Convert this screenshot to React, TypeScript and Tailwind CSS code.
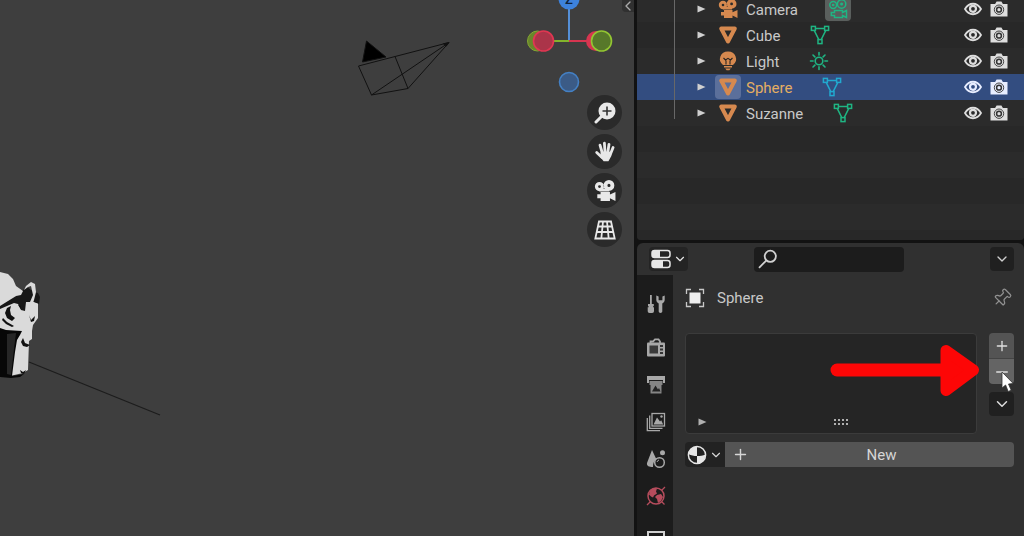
import React from 'react';
import { ChevronDown, ChevronLeft, Minus, Pin, Plus } from 'lucide-react';

type ObjectKind = 'camera' | 'mesh' | 'light';

interface SceneObject {
    name: string;
    kind: ObjectKind;
    selected?: boolean;
    activeData?: boolean;
}

const OBJECTS: SceneObject[] = [
    { name: 'Camera', kind: 'camera', activeData: true },
    { name: 'Cube', kind: 'mesh' },
    { name: 'Light', kind: 'light' },
    { name: 'Sphere', kind: 'mesh', selected: true },
    { name: 'Suzanne', kind: 'mesh' },
];

interface IconProps {
    size?: number;
}

/* ---------- Icons ---------- */

const MovieCameraIcon: React.FC<IconProps> = ({ size = 20 }) => (
    <svg width={size} height={size} viewBox="0 0 20 20" fill="currentColor" aria-hidden="true">
        <path
            fillRule="evenodd"
            d="M5 1.800a4.200 4.200 0 1 0 0 8.400 4.200 4.200 0 0 0 0-8.400zm0 2.900a1.300 1.300 0 1 1 0 2.600 1.300 1.300 0 0 1 0-2.600zM13.600 0a4.900 4.900 0 1 0 0 9.800 4.900 4.900 0 0 0 0-9.800zm0 3.500a1.400 1.400 0 1 1 0 2.800 1.400 1.400 0 0 1 0-2.800z"
        />
        <path d="M5 8h9v2.500H5zM6 11h8.500v2.200L19.500 11v8l-5-2.400V19H6v-2.400H3V13h3z" />
    </svg>
);

const MovieCameraOutline: React.FC = () => (
    <svg width="20" height="20" viewBox="0 0 20 20" fill="none" stroke="currentColor" strokeWidth="1.5" aria-hidden="true">
        <circle cx="5.2" cy="6" r="3.400" />
        <circle cx="13.6" cy="5" r="4.200" />
        <circle cx="5.2" cy="6" r=".6" />
        <circle cx="13.6" cy="5" r=".8" />
        <path d="M6.5 11.5h8v2l4-2v7l-4-2v2h-8v-2H3.3v-3h3.2z" />
    </svg>
);

const MeshIcon: React.FC = () => (
    <svg width="20" height="20" viewBox="0 0 20 20" fill="none" stroke="currentColor" strokeWidth="4" strokeLinejoin="round" aria-hidden="true">
        <path d="M3.200 3.500h13.600L10 16.500z" />
    </svg>
);

const BulbIcon: React.FC = () => (
    <svg width="20" height="20" viewBox="0 0 20 20" fill="currentColor" aria-hidden="true">
        <path d="M10 .5a8 7.500 0 0 0-5 13.400h10A8 7.500 0 0 0 10 .5z" />
        <path d="M5.500 7l2 2L10 7.400l2.500 1.600 2-2M8 9.500v4M12 9.500v4" fill="none" stroke="#2a2522" strokeWidth="1.1" />
        <path d="M6 15h8v1.600H6zM7.200 17.400h5.600l-1.400 1.800H8.600z" />
    </svg>
);

const MeshDataIcon: React.FC = () => (
    <svg width="20" height="20" viewBox="0 0 20 20" fill="none" stroke="currentColor" strokeWidth="1.5" aria-hidden="true">
        <rect x="1.4" y="1.4" width="4" height="4" />
        <rect x="14.6" y="1.4" width="4" height="4" />
        <rect x="8" y="14.6" width="4" height="4" />
        <path d="M5.4 3.4h9.2M4.2 5.4l4.6 9.2M15.8 5.4l-4.6 9.2" />
    </svg>
);

const LightDataIcon: React.FC = () => (
    <svg width="20" height="20" viewBox="0 0 20 20" fill="none" stroke="currentColor" strokeWidth="1.600" strokeLinecap="round" aria-hidden="true">
        <circle cx="10" cy="10" r="3.8" />
        <path d="M10 1.5v2.6M10 15.9v2.6M1.5 10h2.6M15.9 10h2.6M4 4l1.9 1.9M14.1 14.1L16 16M16 4l-1.9 1.9M5.9 14.1L4 16" />
    </svg>
);

const EyeIcon: React.FC = () => (
    <svg width="18" height="14" viewBox="0 0 18 14" aria-hidden="true">
        <path d="M1 7c4-7 12-7 16 0-4 7-12 7-16 0z" fill="none" stroke="currentColor" strokeWidth="1.8" />
        <circle cx="9" cy="6.8" r="3" fill="none" stroke="currentColor" strokeWidth="2.200" />
    </svg>
);

const RenderCameraIcon: React.FC = () => (
    <svg width="18" height="16" viewBox="0 0 18 16" aria-hidden="true">
        <path d="M.5 3h4.600l1.500-2.500h4.800L12.900 3h4.600v12.500H.5z" fill="currentColor" />
        <circle cx="9" cy="8.700" r="4.700" fill="none" stroke="#444" strokeWidth="1" />
        <circle cx="9" cy="8.700" r="2.400" fill="none" stroke="#333" strokeWidth="1.500" />
    </svg>
);

const ZoomIcon: React.FC = () => (
    <svg width="22" height="22" viewBox="0 0 22 22" aria-hidden="true">
        <path d="M8 14l-6 6" stroke="currentColor" strokeWidth="3" strokeLinecap="round" />
        <circle cx="13" cy="9" r="8.5" fill="currentColor" />
        <path d="M13 4.500v9M8.500 9h9" stroke="#333" strokeWidth="1.600" />
    </svg>
);

const HandIcon: React.FC = () => (
    <svg width="22" height="22" viewBox="0 0 22 22" fill="none" stroke="currentColor" strokeWidth="2.8" strokeLinecap="round" aria-hidden="true">
        <path d="M8.3 12L6 4.2M11 11l-.6-8.8M13.8 11.5L15 3.3M16.5 13l2.6-6.5M8 16.5l-5.3-5" />
        <path d="M7.5 11.5h8.800l.4 3-2.700 5h-4l-3.200-4z" fill="currentColor" strokeWidth="1.5" />
    </svg>
);

const GridIcon: React.FC = () => (
    <svg width="22" height="20" viewBox="0 0 22 20" fill="none" stroke="currentColor" strokeWidth="1.8" aria-hidden="true">
        <path d="M5 1.5h12l3.7 17H1.3zM4 6.500h14M2.700 12h16.600M9 1.5l-1.700 17M13 1.5l1.700 17" />
    </svg>
);

const SearchGlyph: React.FC = () => (
    <svg width="20" height="20" viewBox="0 0 20 20" fill="none" stroke="currentColor" strokeWidth="1.8" strokeLinecap="round" aria-hidden="true">
        <circle cx="12.3" cy="7.3" r="5.6" />
        <path d="M8.2 11.6L1.5 18.3" />
    </svg>
);

const PropertiesIcon: React.FC = () => (
    <svg width="20" height="20" viewBox="0 0 20 20" aria-hidden="true">
        <rect x="1" y="1.5" width="18" height="7" rx="2.5" fill="none" stroke="currentColor" strokeWidth="1.5" />
        <path d="M3 1.5h6v7H3a2 2 0 0 1-2-2v-3a2 2 0 0 1 2-2z" fill="currentColor" />
        <rect x="1" y="11.5" width="18" height="7" rx="2.5" fill="none" stroke="currentColor" strokeWidth="1.5" />
        <path d="M3 11.5h9v7H3a2 2 0 0 1-2-2v-3a2 2 0 0 1 2-2z" fill="currentColor" />
    </svg>
);

const ObjectIcon: React.FC = () => (
    <svg width="20" height="20" viewBox="0 0 20 20" fill="none" stroke="currentColor" strokeWidth="1.3" aria-hidden="true">
        <path d="M1.5 6V1.5H6M14 1.5h4.5V6M18.5 14v4.5H14M6 18.5H1.5V14" />
        <rect x="4.500" y="4.500" width="11" height="11" fill="#eee" stroke="none" />
    </svg>
);

const MaterialIcon: React.FC = () => (
    <svg width="20" height="20" viewBox="0 0 20 20" aria-hidden="true">
        <circle cx="10" cy="10" r="8.6" fill="#222" stroke="#e6e6e6" strokeWidth="1.5" />
        <path d="M10 11V1.500A8.500 8.500 0 0 0 1.500 9c2.500 1.600 5.500 2 8.500 2zM10 11v7.500c4.500 0 8-3 8.500-9-2.500 1.200-5.500 1.500-8.500 1.500z" fill="#e6e6e6" />
    </svg>
);

const ToolIcon: React.FC = () => (
    <svg width="20" height="20" viewBox="0 0 20 20" fill="currentColor" aria-hidden="true">
        <path d="M4 1h1.8v9H4zM2 10h5.8v2.200H7v1h1v4a1.800 1.800 0 0 1-1.800 1.800H3.500A1.800 1.800 0 0 1 1.700 17.200v-4h1v-1H2z" />
        <path d="M10.300 1.500v4.300c0 1.900 1 3 2.400 3.700v7.800c0 2.300 3.600 2.300 3.600 0V9.500c1.400-.7 2.400-1.800 2.400-3.700V1.500l-2.300 1v3.700h-3.800V2.500z" />
    </svg>
);

const RenderTabIcon: React.FC = () => (
    <svg width="20" height="20" viewBox="0 0 20 20" aria-hidden="true">
        <path d="M4.500 5V3.500h2.500L9 1.300h3.500l1.500 2.200V5" fill="none" stroke="currentColor" strokeWidth="1.800" />
        <rect x="1" y="4.500" width="18" height="14" rx="1" fill="currentColor" />
        <rect x="3.500" y="7.500" width="8.500" height="8" fill="#3a3a3a" />
        <path d="M14 8h3M14 11.500h3M14 15h3" stroke="#333" strokeWidth="1.800" />
    </svg>
);

const OutputTabIcon: React.FC = () => (
    <svg width="20" height="20" viewBox="0 0 20 20" aria-hidden="true">
        <path d="M1 1h18v7h-2V5H3v3H1z" fill="currentColor" />
        <path d="M3.500 6h13v4h-1v8.500h-11V10h-1z" fill="currentColor" opacity=".75" />
        <path d="M6 16.500l3.500-6 2.500 4 1-1.500 1.500 3.500z" fill="#222" />
    </svg>
);

const ViewLayerTabIcon: React.FC = () => (
    <svg width="20" height="20" viewBox="0 0 20 20" fill="none" stroke="currentColor" strokeWidth="1.300" aria-hidden="true">
        <path d="M1.300 6v12.700H14M3.700 3.500v12.800h12.800" />
        <rect x="6" y="1.500" width="12.500" height="12.500" />
        <path d="M7.500 12.500L11 5.500l3 4 1.200-1.300 2 4.300z" fill="currentColor" stroke="none" />
        <circle cx="15.500" cy="4.500" r="1.200" fill="currentColor" stroke="none" />
    </svg>
);

const SceneTabIcon: React.FC = () => (
    <svg width="20" height="20" viewBox="0 0 20 20" aria-hidden="true">
        <path d="M6 1L1 14c-.5 3 2 4 6 4 0-4 1-6 3.500-7.500z" fill="currentColor" />
        <circle cx="13.500" cy="13.500" r="4.800" fill="none" stroke="currentColor" strokeWidth="1.500" />
        <path d="M11 13a3 3 0 0 1 2-2" stroke="currentColor" fill="none" />
        <circle cx="16.500" cy="3.800" r="2.500" fill="currentColor" />
    </svg>
);

const WorldTabIcon: React.FC = () => (
    <svg width="20" height="20" viewBox="0 0 20 20" aria-hidden="true">
        <circle cx="10" cy="10" r="8" fill="none" stroke="currentColor" strokeWidth="1.500" />
        <path d="M4 4.500c3-3 6-2.500 7-2l-1 3 1 2-3 2-1 2-2-1-2-2zM11 9l4-1 2 3-2 4-3 2-1-4-2-2z" fill="currentColor" />
        <path d="M15.500 4.500L19 1M1 19l3.500-3.500M16 16l2.500 2.500" stroke="currentColor" strokeWidth="1.300" />
    </svg>
);

const ObjectTabIcon: React.FC = () => (
    <svg width="20" height="20" viewBox="0 0 20 20" fill="none" stroke="currentColor" strokeWidth="2" aria-hidden="true">
        <path d="M2 2h16v16H2z" />
    </svg>
);

const Disclosure: React.FC = () => (
    <svg width="9" height="8" viewBox="0 0 9 8" fill="currentColor" aria-hidden="true">
        <path d="M.5.500L8.500 4l-8 3.500z" />
    </svg>
);

/* ---------- 3D viewport ---------- */

const SceneDrawing: React.FC = () => (
    <svg className="absolute left-0 top-0" width="470" height="430" viewBox="0 0 470 430" aria-hidden="true">
        {/* Camera frustum */}
        <g fill="none" stroke="#111" strokeWidth="1">
            <path d="M358.500 66L449 42.500 408 88.500 371.500 95zM371.500 95L449 42.500M395 56.500L408 88.500" />
            <path d="M366.500 41L386 57l-23.500 5z" fill="#000" />
        </g>
        <path d="M449.500 42l-7 1.500 4 3z" fill="#111" />
        <path d="M29 362L160 415" stroke="#1c1c1c" strokeWidth="1.200" />
        {/* Suzanne */}
        <path d="M0 306l17-10 17 6 4 1v15l-5 7-1 6 0 8-3 2-1 29-5 3-13 3-10-2z" fill="#dadada" />
        <path d="M0 328l6 2 16 1-2 4-3 5-2 12-3 24 12-2-4 3-9 1-11-1z" fill="#070707" />
        <path d="M7 334l9-1-2 16-3 26-4-1z" fill="#262626" />
        <path d="M0 305l18-10 5-5 4-3 7 5 4 1 2 4-1 7-5-2-8 0-1 9-4-1-3-6-4-1-14 6z" fill="#181818" />
        <path d="M0 272l8 2 5 5 3 7 7 5-2 4-5 1-16 10z" fill="#dadada" />
        <path d="M24 290l2-4 5-4 4 2 1 8-2 8-1 3-3-1 3-7-2-9-3 1z" fill="#dadada" />
        <path d="M7 308l4-2-1 4 1 5 4 3-3 3-5-3-2-5zM3 318l4 4 7 4-2 1-6-3-4-4zM18 305l3 4 0-3zM29 315l2 5 4-4-1 5-3 1zM23 338l2 5 5 2-3 2-4-1-2-4zM20 370l3 2 3-2-2 4-3-1z" fill="#111" />
    </svg>
);

const AxisGizmo: React.FC = () => (
    <svg className="absolute right-5 top-0" width="88" height="96" viewBox="526 0 88 96" role="img" aria-label="View axes">
        <path d="M569 41V6" stroke="#5590d8" strokeWidth="2" />
        <path d="M569 41h-28" stroke="#83b32c" strokeWidth="2" />
        <path d="M569 41h26" stroke="#d63550" strokeWidth="2" />
        <circle cx="537.500" cy="41" r="10" fill="#68862b" stroke="#85a832" />
        <circle cx="543.500" cy="41" r="10" fill="#ab3449" stroke="#e13652" strokeWidth="1.600" />
        <circle cx="596" cy="41" r="10" fill="#d63550" />
        <circle cx="601.500" cy="41" r="10" fill="#57782a" stroke="#93c632" strokeWidth="1.600" />
        <circle cx="569" cy="82" r="9.500" fill="#3b5b86" stroke="#4480c4" strokeWidth="1.600" />
        <circle cx="569" cy="-1" r="10.500" fill="#3d82dc" />
        <text x="569" y="4" textAnchor="middle" fontSize="13" fontWeight="600" fill="#10233c">Z</text>
    </svg>
);

const NAV_BUTTONS = [
    { label: 'Zoom view', icon: <ZoomIcon /> },
    { label: 'Move view', icon: <HandIcon /> },
    { label: 'Camera view', icon: <MovieCameraIcon size={22} /> },
    { label: 'Toggle perspective', icon: <GridIcon /> },
];

const Viewport: React.FC = () => (
    <main className="relative flex-1 overflow-hidden bg-[#3e3e3e]">
        <SceneDrawing />
        <AxisGizmo />
        <button aria-label="Show sidebar" className="absolute right-0 top-0 flex h-3 w-3 items-center justify-center rounded-bl bg-[#303030] text-[#aaa]">
            <ChevronLeft size={16} className="shrink-0" />
        </button>
        <div className="absolute right-3 top-[95px] flex flex-col gap-1">
            {NAV_BUTTONS.map((b) => (
                <button key={b.label} aria-label={b.label} className="flex h-[35px] w-[35px] items-center justify-center rounded-full bg-[#2a2a2a] text-[#e8e8e8]">
                    {b.icon}
                </button>
            ))}
        </div>
    </main>
);

/* ---------- Outliner ---------- */

const ObjectKindIcon: React.FC<{ kind: ObjectKind }> = ({ kind }) => {
    if (kind === 'camera') return <MovieCameraIcon />;
    if (kind === 'light') return <BulbIcon />;
    return <MeshIcon />;
};

const DataIcon: React.FC<{ kind: ObjectKind }> = ({ kind }) => {
    if (kind === 'camera') return <MovieCameraOutline />;
    if (kind === 'light') return <LightDataIcon />;
    return <MeshDataIcon />;
};

const OutlinerRow: React.FC<{ item: SceneObject }> = ({ item }) => (
    <li className={`flex h-[26px] shrink-0 items-center pl-[60px] pr-4 ${item.selected ? 'bg-[#334d80]' : 'odd:bg-[#2b2b2b]'}`}>
        <button aria-label={`Expand ${item.name}`} className="text-[#d0d0d0]">
            <Disclosure />
        </button>
        <span className={`ml-[9px] flex h-6 w-[26px] items-center justify-center rounded text-[#d6894f] ${item.selected ? 'bg-[#5b6f9b]' : ''}`}>
            <ObjectKindIcon kind={item.kind} />
        </span>
        <span className={`ml-[5px] pt-0.5 ${item.selected ? 'text-[#e5ae62]' : 'text-[#c8c8c8]'}`}>{item.name}</span>
        <span
            className={`ml-[27px] flex h-6 w-[26px] items-center justify-center rounded ${item.selected ? 'text-[#22a9cf]' : 'text-[#1fb583]'} ${item.activeData ? 'bg-[#5a5f5d]' : ''}`}
        >
            <DataIcon kind={item.kind} />
        </span>
        <div className={`ml-auto flex items-center gap-2 ${item.selected ? 'text-[#e8eeff]' : 'text-[#dedede]'}`}>
            <button aria-label={`Hide ${item.name} in viewport`}><EyeIcon /></button>
            <button aria-label={`Disable ${item.name} in renders`}><RenderCameraIcon /></button>
        </div>
    </li>
);

const Outliner: React.FC = () => (
    <section className="relative h-60 shrink-0 overflow-hidden rounded-b bg-[#282828]">
        <ul className="-mt-1">
            {OBJECTS.map((item) => (
                <OutlinerRow key={item.name} item={item} />
            ))}
            {[0, 1, 2, 3, 4].map((n) => (
                <li key={n} className="h-[26px] even:bg-[#282828] odd:bg-[#2b2b2b]" />
            ))}
        </ul>
        {/* Hierarchy line */}
        <div className="absolute left-[37px] top-0 h-[119px] w-px bg-[#686868]" />
    </section>
);

/* ---------- Properties editor ---------- */

const TABS = [
    { label: 'Render', icon: <RenderTabIcon /> },
    { label: 'Output', icon: <OutputTabIcon /> },
    { label: 'View Layer', icon: <ViewLayerTabIcon /> },
    { label: 'Scene', icon: <SceneTabIcon /> },
];

const tabClass = 'flex h-[37px] w-full shrink-0 items-center justify-center';

const PropertyTabs: React.FC = () => (
    <nav className="flex w-9 shrink-0 flex-col overflow-hidden bg-[#1c1c1c] pl-0.5 pt-2.5 text-[#a8a8a8]">
        <button aria-label="Tool" className={`${tabClass} mb-[7px]`}><ToolIcon /></button>
        {TABS.map((tab) => (
            <button key={tab.label} aria-label={tab.label} className={tabClass}>{tab.icon}</button>
        ))}
        <button aria-label="World" className={`${tabClass} text-[#b54c5c]`}><WorldTabIcon /></button>
        <button aria-label="Object" className={`${tabClass} mt-[7px] text-[#d0d0d0]`}><ObjectTabIcon /></button>
    </nav>
);

const PropertiesHeader: React.FC = () => (
    <header className="flex h-8 shrink-0 items-center bg-[#303030] pl-3 pr-2.5 text-[#d0d0d0]">
        <button aria-label="Editor type" className="flex h-6 w-[39px] shrink-0 items-center justify-center gap-0.5 rounded bg-[#242424] text-[#e6e6e6]">
            <PropertiesIcon />
            <ChevronDown size={14} />
        </button>
        <label className="ml-[66px] flex h-[25px] w-[150px] items-center rounded bg-[#1c1c1c] pl-1">
            <SearchGlyph />
            <input type="text" aria-label="Search properties" className="min-w-0 flex-1 bg-transparent px-1 outline-none" />
        </label>
        <button aria-label="Options" className="ml-auto flex h-6 w-6 items-center justify-center rounded bg-[#202020]">
            <ChevronDown size={16} />
        </button>
    </header>
);

const RedArrow: React.FC = () => (
    <svg className="pointer-events-none absolute right-11 top-[67px]" width="150" height="56" viewBox="0 0 150 56" aria-hidden="true">
        <path d="M7 28h110" stroke="#fd0606" strokeWidth="13" strokeLinecap="round" />
        <path d="M116 8.500L143.500 28 116 48.500z" fill="#fd0606" stroke="#fd0606" strokeWidth="11" strokeLinejoin="round" />
    </svg>
);

const MousePointer: React.FC = () => (
    <svg className="pointer-events-none absolute right-2.5 top-24" width="13" height="22" viewBox="0 0 13 22" aria-hidden="true">
        <path d="M1 1v16l3.600-3 2.600 6.500 3-1.300-2.700-6.200 4.700-.6z" fill="#fff" stroke="#333" strokeWidth=".8" />
    </svg>
);

const MaterialPanel: React.FC = () => (
    <div className="relative min-w-0 flex-1 bg-[#303030] pl-3 pr-2.5">
        <div className="flex h-[46px] items-center text-[#c8c8c8]">
            <span><ObjectIcon /></span>
            <span className="ml-3">Sphere</span>
            <button aria-label="Pin" className="ml-auto mr-0.5 text-[#909090]">
                <Pin size={20} strokeWidth={1.5} className="rotate-45" />
            </button>
        </div>

        <div className="mt-3 flex gap-3">
            {/* Material slots */}
            <div className="flex h-[101px] min-w-0 flex-1 items-end rounded border border-[#3b3b3b] bg-[#252525] pb-[7px] pl-3 text-[#b0b0b0]">
                <button aria-label="Show filters" className="flex h-2 items-center"><Disclosure /></button>
                <svg className="mx-auto" width="15" height="8" viewBox="0 0 15 8" fill="currentColor" aria-hidden="true">
                    {[0, 4, 8, 12].map((x) => (
                        <React.Fragment key={x}>
                            <rect x={x} y="1" width="2" height="2" />
                            <rect x={x} y="5" width="2" height="2" />
                        </React.Fragment>
                    ))}
                </svg>
            </div>
            <div className="flex w-[25px] shrink-0 flex-col text-[#dedede]">
                <button aria-label="Add material slot" className="flex h-[25px] items-center justify-center rounded-t bg-[#545454]">
                    <Plus size={16} strokeWidth={2} />
                </button>
                <button aria-label="Remove material slot" className="flex h-[26px] items-center justify-center rounded-b border-t border-[#444] bg-[#646464]">
                    <Minus size={18} strokeWidth={2} />
                </button>
                <button aria-label="Slot specials" className="mt-2 flex h-6 items-center justify-center rounded bg-[#202020]">
                    <ChevronDown size={18} />
                </button>
            </div>
        </div>

        <div className="mt-2 flex h-[25px] overflow-hidden rounded text-[#d6d6d6]">
            <button aria-label="Browse materials" className="flex w-10 shrink-0 items-center justify-center gap-0.5 bg-[#222]">
                <MaterialIcon />
                <ChevronDown size={14} />
            </button>
            <button className="flex flex-1 items-center bg-[#545454] pl-[7px]">
                <Plus size={17} strokeWidth={2} />
                <span className="flex-1 text-center">New</span>
            </button>
        </div>

        <RedArrow />
        <MousePointer />
    </div>
);

export default function App() {
    return (
        <div className="flex h-screen overflow-hidden bg-[#121212] font-['Roboto','Liberation_Sans',sans-serif] text-[15px] leading-5">
            <Viewport />
            <aside className="ml-[3px] flex w-[387px] shrink-0 flex-col gap-[3px]">
                <Outliner />
                <section className="flex min-h-0 flex-1 flex-col overflow-hidden rounded-t-md">
                    <PropertiesHeader />
                    <div className="flex min-h-0 flex-1">
                        <PropertyTabs />
                        <MaterialPanel />
                    </div>
                </section>
            </aside>
        </div>
    );
}
